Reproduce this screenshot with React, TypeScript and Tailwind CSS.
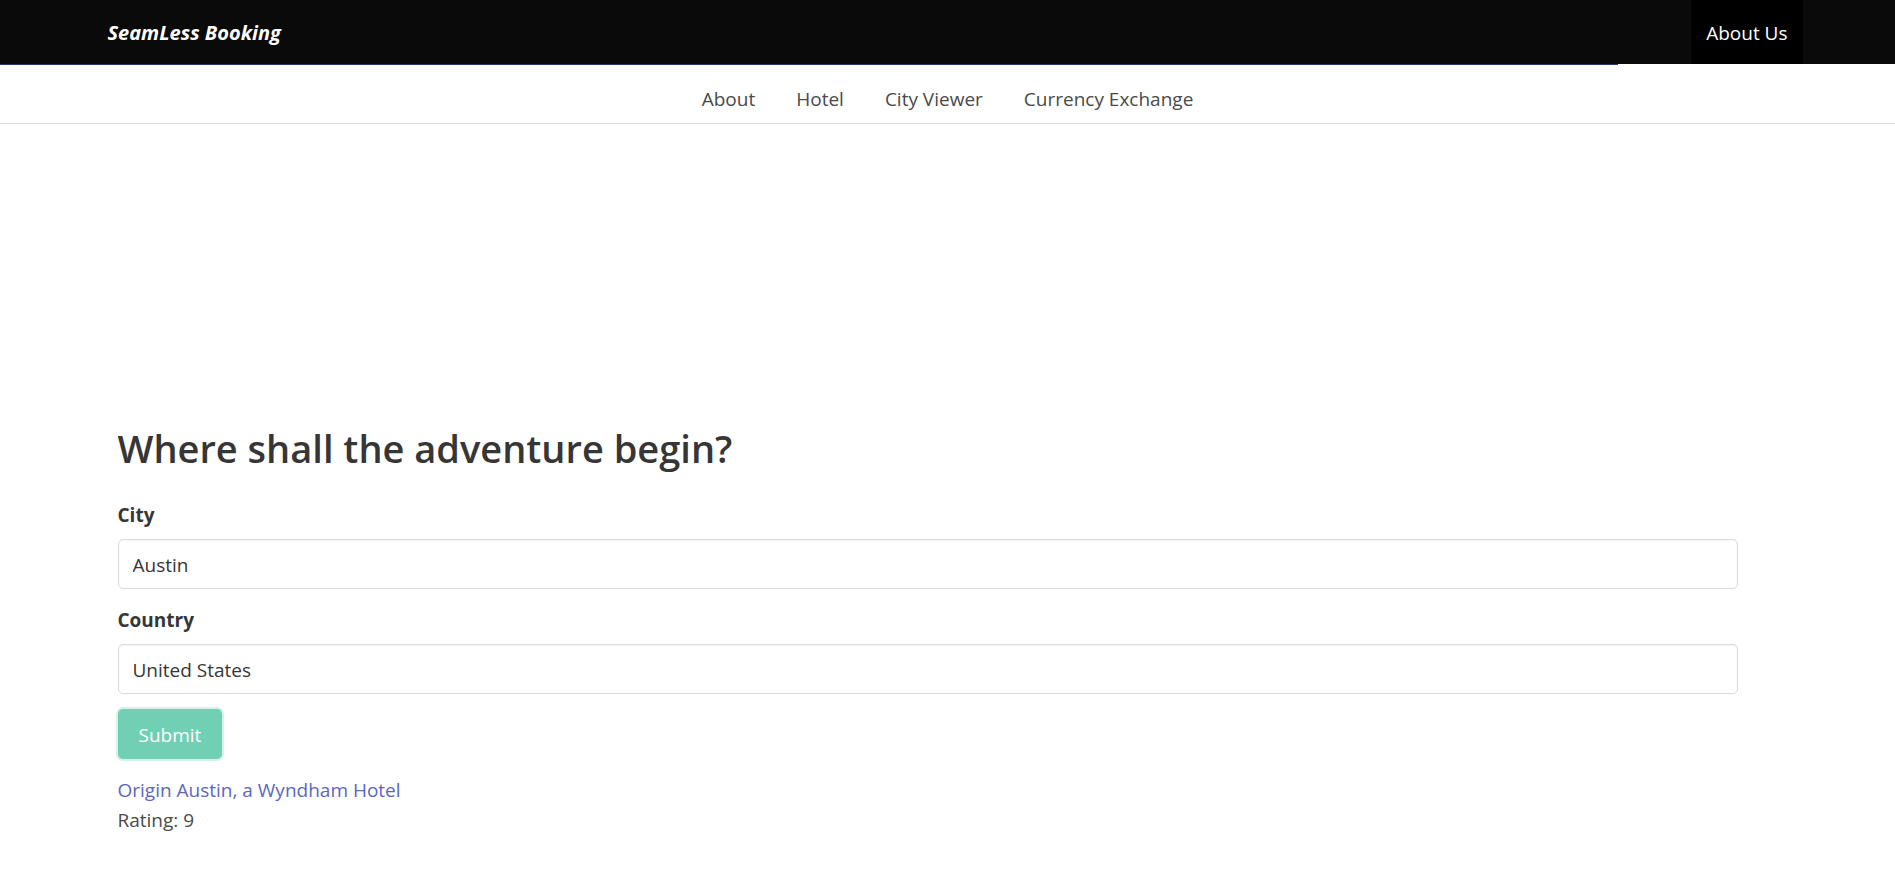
import { useState } from "react";

const links = ["About", "Hotel", "City Viewer", "Currency Exchange"];

type FieldProps = {
  id: string;
  label: string;
  value: string;
  onChange: (value: string) => void;
};

function Field({ id, label, value, onChange }: FieldProps) {
  return (
    <div className="mb-[15px]">
      <label htmlFor={id} className="mb-[9px] block pt-px font-bold text-[#363636]">
        {label}
      </label>
      <input
        id={id}
        type="text"
        value={value}
        onChange={(e) => onChange(e.target.value)}
        className="block h-[50px] w-full rounded-[5px] border border-[#dbdbdb] bg-white px-[14px] pt-[2px] text-[#363636] shadow-[inset_0_1px_2px_rgba(10,10,10,0.05)] outline-none"
      />
    </div>
  );
}

export default function App() {
  const [city, setCity] = useState("Austin");
  const [country, setCountry] = useState("United States");

  return (
    <div className="min-h-screen bg-white font-['Open_Sans','Noto_Sans',sans-serif] text-[19px] leading-[30px] text-[#4a4a4a]">
      <header className="bg-[#0a0a0a] text-white">
        <div className="mx-auto flex h-16 max-w-[1680px] items-stretch justify-between">
          <a href="#home" className="flex items-center pt-[2px] text-[20px] font-bold italic">
            SeamLess Booking
          </a>
          <a href="#about-us" className="-mr-[15px] flex items-center bg-black px-[15px] pt-[2px]">
            About Us
          </a>
        </div>
      </header>
      <div className="h-px w-[1618px] max-w-full bg-[#2b3a67]" />
      <nav aria-label="Sections" className="border-b border-[#dbdbdb] pt-[19px] pb-[9px]">
        <ul className="flex justify-center gap-[41px]">
          {links.map((name) => (
            <li key={name}>
              <a href="#section">{name}</a>
            </li>
          ))}
        </ul>
      </nav>
      <main className="mx-auto max-w-[1680px] pt-[302px] pr-[50px] pl-[10px]">
        <h1 className="mb-7 text-[38px] font-semibold leading-[45px] text-[#363636]">
          Where shall the adventure begin?
        </h1>
        <form onSubmit={(e) => e.preventDefault()}>
          <Field id="city" label="City" value={city} onChange={setCity} />
          <Field id="country" label="Country" value={country} onChange={setCountry} />
          <button
            type="submit"
            className="block h-[50px] rounded-[5px] bg-[#71cfb3] px-[21px] pt-[2px] text-white shadow-[0_0_0_2px_#d4f2e8]"
          >
            Submit
          </button>
        </form>
        <section className="mt-4">
          <a href="#hotel" className="text-[#5c67c0]">
            Origin Austin, a Wyndham Hotel
          </a>
          <p>Rating: 9</p>
        </section>
      </main>
    </div>
  );
}
